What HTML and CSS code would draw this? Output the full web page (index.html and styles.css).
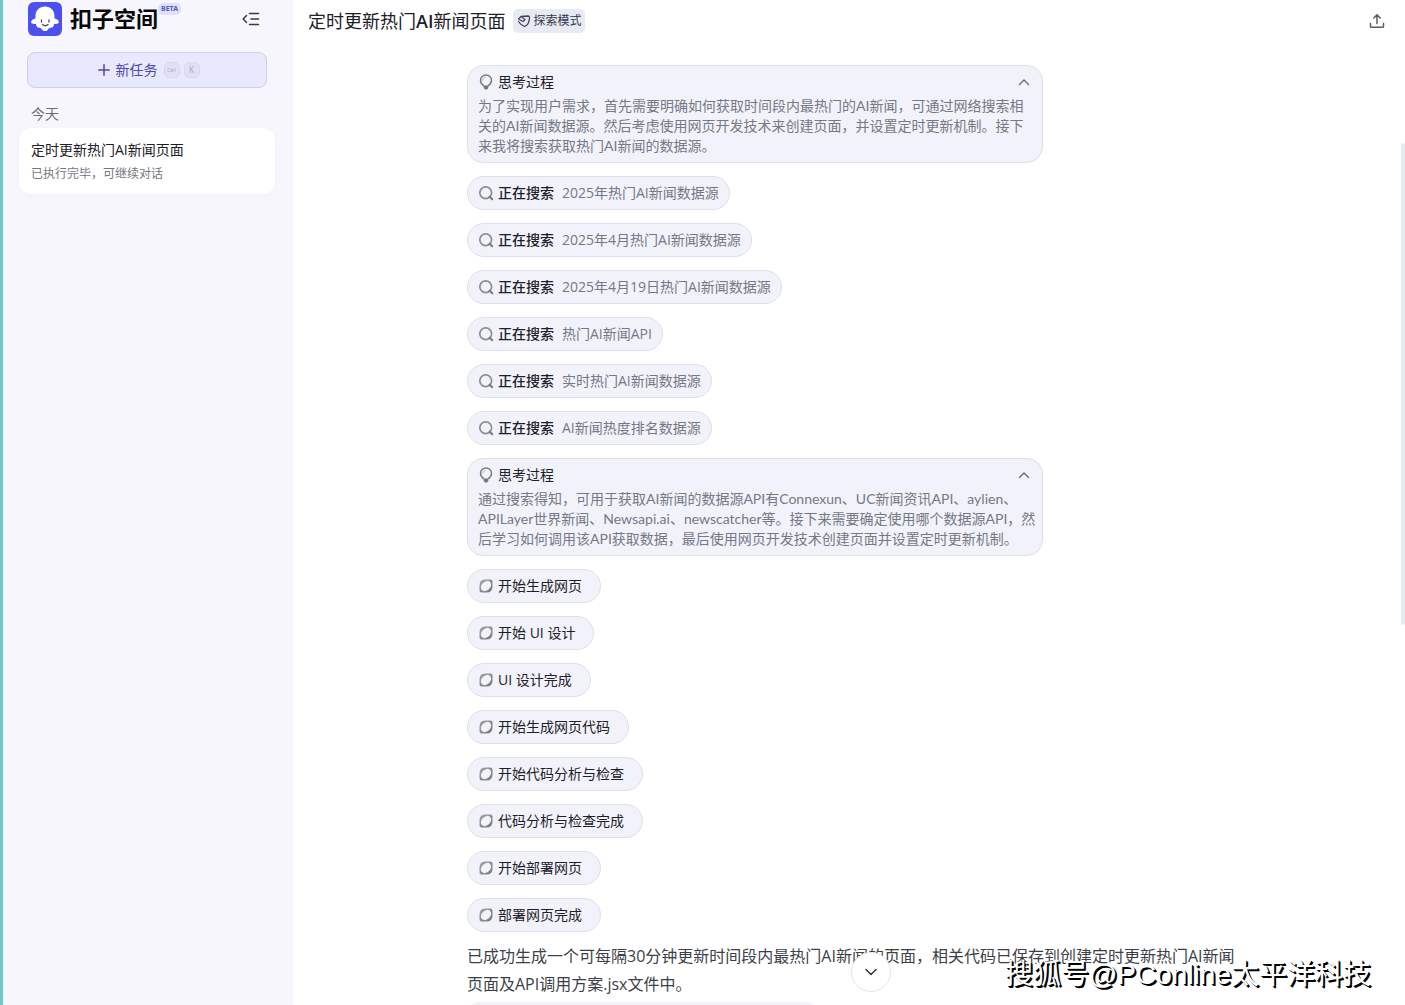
FILE: index.html
```html
<!DOCTYPE html>
<html lang="zh-CN">
<head>
<meta charset="utf-8">
<meta name="viewport" content="width=device-width, initial-scale=1">
<title>扣子空间</title>
<link rel="stylesheet" href="styles.css">
</head>
<body>
<svg class="defs" aria-hidden="true">
  <defs>
    <linearGradient id="shade" x1="0" y1="0" x2="1" y2="1"><stop offset="0" stop-color="#a3a3a6"/><stop offset="1" stop-color="#77777b"/></linearGradient>
    <symbol id="bulb" viewBox="0 0 16 16"><path d="M6 11.800C3.600 10.300 2.500 8.700 2.500 6.500a5.500 5.500 0 0 1 11 0c0 2.200-1.100 3.800-3.500 5.300" fill="none" stroke="#77777b" stroke-width="1.400"/><path d="M4.800 6.500C4.900 4.800 5.900 3.700 7.500 3.300" fill="none" stroke="#aaaaae"/><path d="M5.700 11.500h4.600v2.500L9 15.500H7L5.700 14z" fill="#77777b"/></symbol>
    <symbol id="search" viewBox="0 0 16 16"><circle cx="7.700" cy="7.700" r="5.900" fill="none" stroke="#8d8d91" stroke-width="1.700"/><path d="M11.600 11.600l2.600 2.600" stroke="#77777b" stroke-width="2" stroke-linecap="round"/></symbol>
    <symbol id="code" viewBox="0 0 16 16"><path d="M7 1.500H12.500Q14.500 1.500 14.500 3.500V8.500Q14.500 14.500 8.500 14.500H3.500Q1.500 14.500 1.500 12.500V7.500Q1.500 1.500 7 1.500z" fill="url(#shade)"/><ellipse cx="8" cy="8" rx="5.800" ry="4.400" transform="rotate(-45 8 8)" fill="#f2f3f8"/></symbol>
  </defs>
</svg>
<div class="app">
  <aside class="sidebar">
    <header class="brand">
      <svg class="logo" viewBox="0 0 34 34" aria-hidden="true"><rect width="34" height="34" rx="6" fill="#4c50ee"/><path d="M17 4.500C11.500 4.500 7.500 8.500 7.500 14V16.500C5 17 2.800 18.800 3.200 20.500C3.600 22 6 22.200 8 21.700C8 24 9 25.800 11.500 25.700C12.500 25.700 13.200 26.500 14 27.500C15.500 29.600 18.500 29.600 20 27.500C20.800 26.500 21.500 25.700 22.500 25.700C25 25.800 26 24 26 21.700C28 22.200 30.400 22 30.800 20.500C31.200 18.800 29 17 26.500 16.500V14C26.500 8.500 22.500 4.500 17 4.500z" fill="#fff"/><path d="M13.500 18v2M21 18v2M14.500 22.500Q17.300 25 20 22.500" fill="none" stroke="#4a4a78" stroke-width="1.300" stroke-linecap="round"/></svg>
      <strong class="brand-name">扣子空间</strong>
      <span class="beta">BETA</span>
      <button class="icon-button collapse" aria-label="收起侧栏"><svg width="18" height="16" viewBox="0 0 18 16" fill="none" stroke="#39393f" stroke-width="1.500" stroke-linecap="round" stroke-linejoin="round"><path d="M7.500 2.500H16.500M9 8H16.500M7.500 13.500H16.500M4.500 4.500L1.200 8L4.500 11.500"/></svg></button>
    </header>
    <button class="new-task">
      <svg width="12" height="12" viewBox="0 0 12 12" stroke="#5147a8" stroke-width="1.500" stroke-linecap="round" aria-hidden="true"><path d="M6 .8V11.200M.8 6H11.200"/></svg>
      <span>新任务</span>
      <span class="keys"><kbd>Ctrl</kbd><kbd class="key-letter">K</kbd></span>
    </button>
    <h2 class="day">今天</h2>
    <a class="task" href="#">
      <span class="task-title">定时更新热门AI新闻页面</span>
      <span class="task-state">已执行完毕，可继续对话</span>
    </a>
  </aside>
  <main class="main">
    <header class="topbar">
      <h1 class="title">定时更新热门<b>AI</b>新闻页面</h1>
      <span class="mode"><svg width="14" height="14" viewBox="0 0 14 14" fill="none" stroke="#41465c" stroke-width="1.300" stroke-linejoin="round" stroke-linecap="round" aria-hidden="true"><path d="M4 2.500L11 2Q12.500 2 12.500 3.500C12.500 8 11 11 7.500 12.500C5 11.500 3 10 1.500 7.500M4 2.500L1.500 5L6 7.500L8 5.500L4 2.500"/></svg>探索模式</span>
      <button class="icon-button share" aria-label="分享"><svg width="16" height="16" viewBox="0 0 16 16" fill="none" stroke="#5c5c61" stroke-width="1.500" stroke-linecap="round" stroke-linejoin="round"><path d="M8 10.500V2M4.800 5L8 1.800L11.200 5M1.500 10.500V13.200Q1.500 14.300 2.600 14.300H13.400Q14.500 14.300 14.500 13.200V10.500"/></svg></button>
    </header>
    <div class="scroller">
      <div class="thread">
        <ul class="steps">
          <li class="thought">
            <button class="thought-head"><svg class="icon"><use href="#bulb"/></svg>思考过程<svg class="chevron" viewBox="0 0 12 12"><path d="M1.500 8.500L6 4L10.500 8.500"/></svg></button>
            <p>为了实现用户需求，首先需要明确如何获取时间段内最热门的AI新闻，可通过网络搜索相关的AI新闻数据源。然后考虑使用网页开发技术来创建页面，并设置定时更新机制。接下来我将搜索获取热门AI新闻的数据源。</p>
          </li>
          <li><button class="pill"><svg class="icon"><use href="#search"/></svg><b>正在搜索</b><span>2025年热门AI新闻数据源</span></button></li>
          <li><button class="pill"><svg class="icon"><use href="#search"/></svg><b>正在搜索</b><span>2025年4月热门AI新闻数据源</span></button></li>
          <li><button class="pill"><svg class="icon"><use href="#search"/></svg><b>正在搜索</b><span>2025年4月19日热门AI新闻数据源</span></button></li>
          <li><button class="pill"><svg class="icon"><use href="#search"/></svg><b>正在搜索</b><span>热门AI新闻API</span></button></li>
          <li><button class="pill"><svg class="icon"><use href="#search"/></svg><b>正在搜索</b><span>实时热门AI新闻数据源</span></button></li>
          <li><button class="pill"><svg class="icon"><use href="#search"/></svg><b>正在搜索</b><span>AI新闻热度排名数据源</span></button></li>
          <li class="thought">
            <button class="thought-head"><svg class="icon"><use href="#bulb"/></svg>思考过程<svg class="chevron" viewBox="0 0 12 12"><path d="M1.500 8.500L6 4L10.500 8.500"/></svg></button>
            <p>通过搜索得知，可用于获取AI新闻的数据源API有Connexun、UC新闻资讯API、aylien、APILayer世界新闻、Newsapi.ai、newscatcher等。接下来需要确定使用哪个数据源API，然后学习如何调用该API获取数据，最后使用网页开发技术创建页面并设置定时更新机制。</p>
          </li>
          <li><button class="pill action"><svg class="icon"><use href="#code"/></svg>开始生成网页</button></li>
          <li><button class="pill action"><svg class="icon"><use href="#code"/></svg>开始 UI 设计</button></li>
          <li><button class="pill action"><svg class="icon"><use href="#code"/></svg>UI 设计完成</button></li>
          <li><button class="pill action"><svg class="icon"><use href="#code"/></svg>开始生成网页代码</button></li>
          <li><button class="pill action"><svg class="icon"><use href="#code"/></svg>开始代码分析与检查</button></li>
          <li><button class="pill action"><svg class="icon"><use href="#code"/></svg>代码分析与检查完成</button></li>
          <li><button class="pill action"><svg class="icon"><use href="#code"/></svg>开始部署网页</button></li>
          <li><button class="pill action"><svg class="icon"><use href="#code"/></svg>部署网页完成</button></li>
        </ul>
        <p class="answer">已成功生成一个可每隔30分钟更新时间段内最热门AI新闻的页面，相关代码已保存到创建定时更新热门AI新闻页面及API调用方案.jsx文件中。</p>
        <div class="file-card"></div>
      </div>
    </div>
    <button class="to-bottom" aria-label="回到底部"><svg width="14" height="14" viewBox="0 0 14 14" fill="none" stroke="#333338" stroke-width="1.500" stroke-linecap="round" stroke-linejoin="round"><path d="M2 4.500L7 9.500L12 4.500"/></svg></button>
    <div class="scrollbar"></div>
    <div class="watermark">搜狐号@PConline太平洋科技</div>
  </main>
</div>
</body>
</html>
```

FILE: styles.css
```css
* { box-sizing: border-box; }
body {
  margin: 0;
  background: #fff;
  color: #1d2029;
  font: 14px/20px "Open Sans", "Noto Sans CJK SC", sans-serif;
}
button { margin: 0; padding: 0; border: 0; background: none; color: inherit; font: inherit; text-align: left; cursor: pointer; }
svg { flex: none; display: block; }
h1, h2, p, ul { margin: 0; padding: 0; font-weight: 400; }
ul { list-style: none; }
.defs { position: absolute; width: 0; height: 0; }

.app { display: flex; height: 100vh; overflow: hidden; border-left: 3px solid #70c8cc; }

/* Sidebar */
.sidebar { flex: none; width: 290px; padding: 2px 18px 0 16px; background: #f6f6fc; }
.brand { display: flex; align-items: flex-start; height: 34px; padding: 0 12px 0 9px; }
.logo { width: 34px; height: 34px; }
.brand-name { margin-left: 8px; color: #08080c; font-size: 22px; line-height: 32px; font-weight: 700; }
.beta { margin-top: 1px; padding: 0 3px; border-radius: 5px; background: #dddffb; color: #5a58b8; font: 700 7px/12px "Noto Sans", sans-serif; }
.icon-button { display: grid; place-items: center; width: 24px; height: 24px; }
.collapse { align-self: center; margin-left: auto; }
.new-task {
  display: flex; align-items: center; justify-content: center; gap: 6px;
  width: 240px; height: 36px; margin: 16px 0 0 8px; padding-left: 3px;
  border: 1px solid #cfcfed; border-radius: 8px; background: #e8e9fd; color: #5147a8;
}
.keys { display: flex; gap: 4px; }
kbd { width: 16px; height: 16px; border: 1px solid #d6d7f0; border-radius: 6px; background: #e0e1f6; color: #a5a6cf; font: 5px/14px "Noto Sans", sans-serif; text-align: center; }
.key-letter { font-size: 8px; }
.day { margin: 16px 0 4px 12px; color: #6c6c76; font-size: 14px; line-height: 20px; }
.task { display: flex; flex-direction: column; gap: 4px; padding: 12px 12px 10px; border-radius: 12px; background: #fff; box-shadow: 0 2px 6px #50508008; color: inherit; text-decoration: none; }
.task-state { color: #777781; font-size: 12px; }

/* Conversation */
.main { position: relative; flex: 1; min-width: 0; display: flex; flex-direction: column; }
.topbar { flex: none; display: flex; align-items: center; gap: 8px; height: 42px; padding: 0 16px 0 15px; }
.title { font-size: 18px; line-height: 26px; }
.title b { font-weight: 600; }
.mode { display: flex; align-items: center; gap: 2px; height: 24px; padding: 0 4px; border-radius: 5px; background: #e8eaf3; color: #30364a; font-size: 12px; }
.share { margin-left: auto; }
.scroller { flex: 1; min-height: 0; padding: 23px 0 0 4px; overflow: hidden; }
.thread { max-width: 768px; margin: 0 auto; }
.steps { display: grid; gap: 13px; }
.thought { width: 75%; padding: 6px 6px 6px 10px; border: 1px solid #dddfea; border-radius: 16px; background: #f2f3fa; }
.thought-head { display: flex; align-items: center; gap: 4px; width: 100%; margin-bottom: 4px; }
.thought p { color: #747887; font-family: Lato, "Noto Sans CJK SC", sans-serif; }
.icon { width: 16px; height: 16px; }
.chevron { width: 12px; height: 12px; margin: 0 6px 0 auto; fill: none; stroke: #65656d; stroke-width: 1.3; stroke-linecap: round; stroke-linejoin: round; }
.pill { display: flex; align-items: center; gap: 4px; height: 34px; padding: 0 10px; border: 1px solid #dddfea; border-radius: 17px; background: #f2f3fa; }
.pill b { font-weight: 500; }
.pill span { margin-left: 4px; color: #747887; }
.action { padding-right: 18px; }
.answer { padding-top: 10px; color: #3c3f49; font-size: 16px; line-height: 28px; }
.file-card { width: 350px; height: 60px; margin-top: 4px; border-radius: 12px; background: #f2f3fa; }

/* Floating over the conversation */
.to-bottom { position: absolute; bottom: 13px; left: 52%; display: grid; place-items: center; width: 40px; height: 40px; margin-left: -20px; border: 1px solid #e6e6ea; border-radius: 50%; background: #fff; }
.scrollbar { position: absolute; top: 143px; right: 0; width: 4px; height: 48%; border-radius: 2px; background: #e8ecf2; }
.watermark { position: absolute; right: 34px; bottom: 10px; color: #fff; font: 28px/40px "Liberation Sans", "Noto Sans CJK SC", sans-serif; text-shadow: 1px 1px 0 #000, 2px 2px 0 #000; white-space: nowrap; }
```
